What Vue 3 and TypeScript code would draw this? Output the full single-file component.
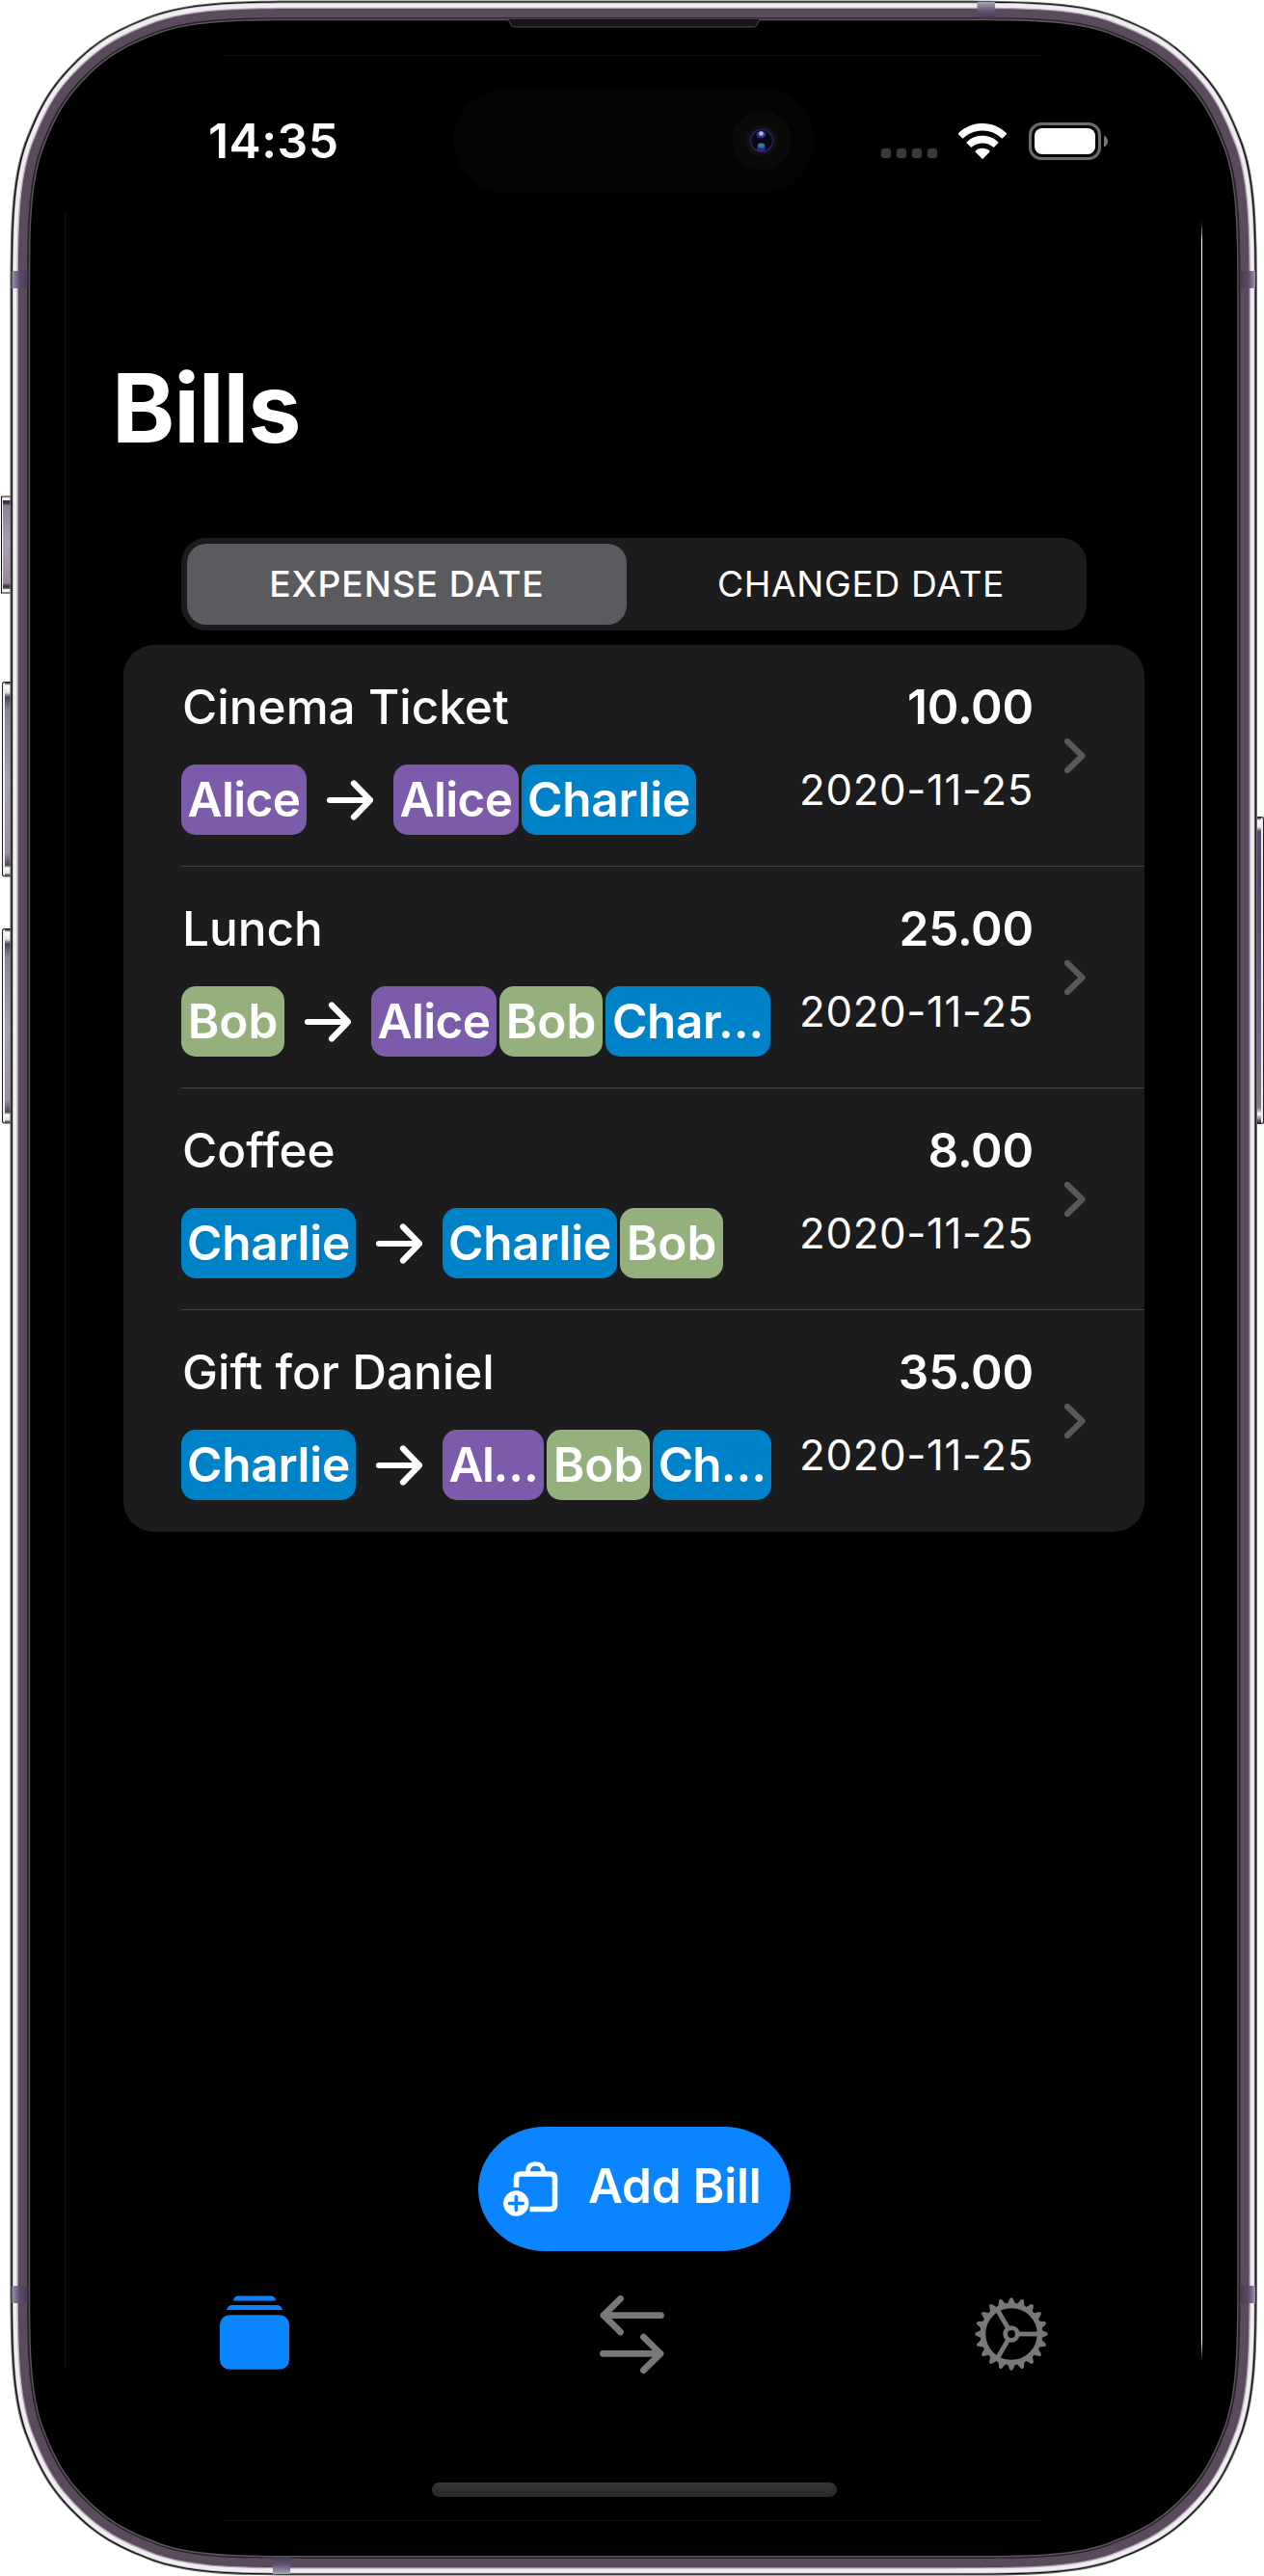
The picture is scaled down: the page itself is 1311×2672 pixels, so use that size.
<script setup lang="ts">
interface Chip {
  label: string
  tone: 'violet' | 'blue' | 'green'
  width: number
  tracking: number
}
interface Bill {
  title: string
  amount: string
  date: string
  payer: Chip
  sharers: Chip[]
}

const alice: Chip = { label: 'Alice', tone: 'violet', width: 130, tracking: -0.6 }
const bob: Chip = { label: 'Bob', tone: 'green', width: 107, tracking: 0 }
const charlie: Chip = { label: 'Charlie', tone: 'blue', width: 181, tracking: -0.25 }

const bills: Bill[] = [
  { title: 'Cinema Ticket', amount: '10.00', date: '2020-11-25', payer: alice, sharers: [alice, charlie] },
  {
    title: 'Lunch',
    amount: '25.00',
    date: '2020-11-25',
    payer: bob,
    sharers: [alice, bob, { label: 'Char…', tone: 'blue', width: 171, tracking: -0.4 }],
  },
  { title: 'Coffee', amount: '8.00', date: '2020-11-25', payer: charlie, sharers: [charlie, bob] },
  {
    title: 'Gift for Daniel',
    amount: '35.00',
    date: '2020-11-25',
    payer: charlie,
    sharers: [
      { label: 'Al…', tone: 'violet', width: 105, tracking: -1.4 },
      bob,
      { label: 'Ch…', tone: 'blue', width: 123, tracking: -0.9 },
    ],
  },
]

/* Rounded rectangle with continuous-curvature corners. */
function squircle(l: number, t: number, r: number, b: number, rad: number): string {
  const p = (k: number): number => +(k * rad).toFixed(2)
  const a = p(1.45)
  const k1 = p(1.09)
  const c = p(0.86)
  const d = p(0.49)
  const e = p(0.133)
  const m = p(0.293)
  return [
    `M${l + a} ${t}`,
    `H${r - a}`,
    `C${r - k1} ${t} ${r - c} ${t} ${r - p(0.67)} ${t + p(0.065)}`,
    `C${r - d} ${t + e} ${r - p(0.4)} ${t + p(0.186)} ${r - m} ${t + m}`,
    `C${r - p(0.186)} ${t + p(0.4)} ${r - e} ${t + d} ${r - p(0.065)} ${t + p(0.67)}`,
    `C${r} ${t + c} ${r} ${t + k1} ${r} ${t + a}`,
    `V${b - a}`,
    `C${r} ${b - k1} ${r} ${b - c} ${r - p(0.065)} ${b - p(0.67)}`,
    `C${r - e} ${b - d} ${r - p(0.186)} ${b - p(0.4)} ${r - m} ${b - m}`,
    `C${r - p(0.4)} ${b - p(0.186)} ${r - d} ${b - e} ${r - p(0.67)} ${b - p(0.065)}`,
    `C${r - c} ${b} ${r - k1} ${b} ${r - a} ${b}`,
    `H${l + a}`,
    `C${l + k1} ${b} ${l + c} ${b} ${l + p(0.67)} ${b - p(0.065)}`,
    `C${l + d} ${b - e} ${l + p(0.4)} ${b - p(0.186)} ${l + m} ${b - m}`,
    `C${l + p(0.186)} ${b - p(0.4)} ${l + e} ${b - d} ${l + p(0.065)} ${b - p(0.67)}`,
    `C${l} ${b - c} ${l} ${b - k1} ${l} ${b - a}`,
    `V${t + a}`,
    `C${l} ${t + k1} ${l} ${t + c} ${l + p(0.065)} ${t + p(0.67)}`,
    `C${l + e} ${t + d} ${l + p(0.186)} ${t + p(0.4)} ${l + m} ${t + m}`,
    `C${l + p(0.4)} ${t + p(0.186)} ${l + d} ${t + e} ${l + p(0.67)} ${t + p(0.065)}`,
    `C${l + c} ${t} ${l + k1} ${t} ${l + a} ${t}Z`,
  ].join('')
}

/* Case layers, outermost first: inset from the case edge and fill. */
const layers = [
  { x: 0, y: 0, fill: '#6f726f' },
  { x: 1.2, y: 1, fill: '#0a0a0a' },
  { x: 2.5, y: 2, fill: '#a9a9ab' },
  { x: 3.2, y: 2.8, fill: '#f0edf1' },
  { x: 7, y: 7.2, fill: '#b9aabb' },
  { x: 8.4, y: 8.4, fill: '#5b495e' },
  { x: 17.6, y: 17.6, fill: '#2b1f2d' },
  { x: 19.4, y: 19, fill: '#585858' },
  { x: 20.8, y: 20.6, fill: '#000' },
].map((s) => ({ fill: s.fill, d: squircle(10.4 + s.x, 0.6 + s.y, 1304 - s.x, 2671.6 - s.y, 222 - s.x) }))

const teeth = Array.from({ length: 20 }, (_, i) => i * 18)
</script>

<template>
  <div class="phone">
    <svg class="case" viewBox="0 0 1311 2672" aria-hidden="true">
      <defs>
        <linearGradient id="band-l" x1="0" x2="1"><stop offset="0" stop-color="#9c93b3" /><stop offset=".5" stop-color="#5a4a66" /><stop offset="1" stop-color="#4b3c56" /></linearGradient>
        <linearGradient id="band-r" x1="1" x2="0"><stop offset="0" stop-color="#9c93b3" /><stop offset=".5" stop-color="#5a4a66" /><stop offset="1" stop-color="#4b3c56" /></linearGradient>
        <linearGradient id="band-t" x1="0" x2="0" y1="0" y2="1"><stop offset="0" stop-color="#a9a2bc" /><stop offset=".6" stop-color="#5f506b" /><stop offset="1" stop-color="#4b3c56" /></linearGradient>
        <linearGradient id="band-b" x1="0" x2="0" y1="1" y2="0"><stop offset="0" stop-color="#a9a2bc" /><stop offset=".6" stop-color="#5f506b" /><stop offset="1" stop-color="#4b3c56" /></linearGradient>
        <linearGradient id="key" x1="0" x2="0" y1="0" y2="1">
          <stop offset="0" stop-color="#222" /><stop offset=".015" stop-color="#fff" /><stop offset=".05" stop-color="#e8e8e8" /><stop offset=".075" stop-color="#4c4058" /><stop offset=".14" stop-color="#8a7f98" /><stop offset=".5" stop-color="#a9a0b6" /><stop offset=".88" stop-color="#9a8ca2" /><stop offset=".945" stop-color="#54465c" /><stop offset=".96" stop-color="#fff" /><stop offset=".985" stop-color="#ddd" /><stop offset="1" stop-color="#222" />
        </linearGradient>
        <linearGradient id="action" x1="0" x2="0" y1="0" y2="1">
          <stop offset="0" stop-color="#3a3a3a" /><stop offset=".03" stop-color="#3a3040" /><stop offset=".06" stop-color="#8c8098" /><stop offset=".5" stop-color="#aaa1b6" /><stop offset=".93" stop-color="#9a8796" /><stop offset=".97" stop-color="#3a3040" /><stop offset="1" stop-color="#777" />
        </linearGradient>
        <linearGradient id="power" x1="0" x2="0" y1="0" y2="1">
          <stop offset="0" stop-color="#222" /><stop offset=".01" stop-color="#fff" /><stop offset=".03" stop-color="#eee" /><stop offset=".045" stop-color="#5b4d68" /><stop offset=".2" stop-color="#57456f" /><stop offset=".8" stop-color="#776c86" /><stop offset=".95" stop-color="#8c7688" /><stop offset=".97" stop-color="#fff" /><stop offset="1" stop-color="#222" />
        </linearGradient>
        <linearGradient id="glint" x1="0" x2="0" y1="0" y2="1"><stop offset="0" stop-color="#fff" stop-opacity="0" /><stop offset=".01" stop-color="#fff" /><stop offset=".99" stop-color="#fff" /><stop offset="1" stop-color="#fff" stop-opacity="0" /></linearGradient>
      </defs>

      <rect x="1" y="514.5" width="12" height="101" fill="#111" />
      <rect x="2" y="515.5" width="9" height="99" fill="#f3eef1" />
      <rect x="3" y="519" width="8" height="92" fill="url(#action)" />
      <g v-for="y in [707, 963]" :key="y">
        <rect x="2" :y="y" width="12" height="202.5" rx="2.5" fill="#222" />
        <rect x="3" :y="y + 1" width="9" height="200.5" rx="2" fill="#eee" />
        <rect x="5" :y="y + 1" width="6" height="200.5" fill="url(#key)" />
      </g>
      <rect x="1298" y="847" width="13" height="319" rx="2.5" fill="#222" />
      <rect x="1300" y="848" width="10" height="317" rx="2" fill="#f0eef2" />
      <rect x="1300" y="848" width="8" height="317" fill="url(#power)" />

      <path v-for="(s, i) in layers" :key="i" :d="s.d" :fill="s.fill" />

      <rect x="12.5" y="281" width="16" height="18" fill="url(#band-l)" />
      <rect x="12.5" y="2371" width="16" height="18" fill="url(#band-l)" />
      <rect x="1287" y="281" width="15" height="18" fill="url(#band-r)" />
      <rect x="1287" y="2371" width="15" height="18" fill="url(#band-r)" />
      <rect x="1013.5" y="2" width="18.5" height="16.5" fill="url(#band-t)" />
      <rect x="283" y="2653" width="18" height="17" fill="url(#band-b)" />

      <path d="M527 20L530 26Q531 28 534 28H781Q784 28 785 26L788 20" fill="#161616" stroke="#4c4c4c" stroke-width="1" />
      <path d="M230 57.5H1080M230 2614.5H1080M67.5 220V2455" fill="none" stroke="#101010" />
      <rect x="1246" y="229" width="1" height="2220" fill="url(#glint)" />
    </svg>

    <main class="screen">
      <header class="status">
        <span class="time">14:35</span>
        <div class="island">
          <svg class="camera" viewBox="0 0 62 62">
            <circle cx="31" cy="31" r="31" fill="#0a0a0a" />
            <circle cx="31" cy="31" r="16" fill="#111" />
            <circle cx="31" cy="31" r="11.5" fill="#070714" stroke="#1c2560" stroke-width="1.6" />
            <ellipse cx="30.5" cy="24.5" rx="5" ry="3.4" fill="#34348a" />
            <circle cx="30.5" cy="23.5" r="2.2" fill="#b9b9dc" />
            <ellipse cx="30.5" cy="39" rx="4.6" ry="3.2" fill="#3f1f86" />
            <ellipse cx="30.5" cy="35.8" rx="3.6" ry="2.6" fill="#2f7896" />
          </svg>
        </div>
        <div class="signals">
          <span class="dots"><i v-for="n in 4" :key="n"></i></span>
          <svg class="wifi" viewBox="0 0 50 37" fill="#fff">
            <path d="M25 0C35.200 0 43.500 4 50 10.200Q50.300 10.900 49.800 11.500L46 15.300Q45.300 15.800 44.700 15.300C39.500 10.500 32.600 7.600 25 7.600S10.500 10.500 5.300 15.300Q4.700 15.800 4 15.300L.2 11.500Q-.3 10.900 0 10.200C6.500 4 14.800 0 25 0Z" />
            <path d="M25 12.800C31.500 12.800 37 15.200 41.200 19.200Q41.700 19.900 41.200 20.500L37.200 24.500Q36.600 25 36 24.500C33.200 22 29.400 20.400 25 20.400S16.800 22 14 24.500Q13.400 25 12.800 24.500L8.800 20.500Q8.300 19.900 8.800 19.200C13 15.200 18.500 12.800 25 12.800Z" />
            <path d="M25 25.700C28 25.700 30.400 26.700 32.300 28.400Q32.800 29.100 32.300 29.700L25.700 36.400Q25 37 24.300 36.400L17.700 29.700Q17.200 29.100 17.700 28.400C19.600 26.700 22 25.700 25 25.700Z" />
          </svg>
          <svg class="battery" viewBox="0 0 82 39">
            <rect x="1.500" y="1.500" width="72" height="36" rx="11.500" fill="none" stroke="#6c6c6c" stroke-width="3" />
            <rect x="6" y="6" width="63" height="27" rx="8" fill="#fff" />
            <path d="M78 13.500Q82 15.500 82 19.500T78 25.500Z" fill="#777" />
          </svg>
        </div>
      </header>

      <h1 class="title">Bills</h1>

      <div class="segments">
        <button class="segment active">EXPENSE DATE</button>
        <button class="segment">CHANGED DATE</button>
      </div>

      <section class="list">
        <article v-for="bill in bills" :key="bill.title" class="bill">
          <div class="info">
            <h2 class="name">{{ bill.title }}</h2>
            <div class="flow">
              <span class="chip" :class="bill.payer.tone" :style="{ width: bill.payer.width + 'px', letterSpacing: bill.payer.tracking + 'px' }">{{ bill.payer.label }}</span>
              <svg class="arrow" viewBox="0 0 48 42"><path d="M3 21H45M28 3.500L45 21L28 38.500" /></svg>
              <div class="sharers">
                <span v-for="s in bill.sharers" :key="s.label" class="chip" :class="s.tone" :style="{ width: s.width + 'px', letterSpacing: s.tracking + 'px' }">{{ s.label }}</span>
              </div>
            </div>
          </div>
          <div class="figures">
            <span class="amount">{{ bill.amount }}</span>
            <time class="date">{{ bill.date }}</time>
          </div>
          <svg class="chevron" viewBox="0 0 22 36"><path d="M3 3L18.500 18L3 33" /></svg>
        </article>
      </section>

      <button class="add">
        <svg class="bag" viewBox="0 0 57 57">
          <path d="M13.500 27V17.500Q13.500 13 18 13H49Q53.500 13 53.500 17.500V45Q53.500 49.500 49 49.500H27.500" fill="none" stroke="#fff" stroke-width="5.600" />
          <path d="M25.500 13V10.500Q25.500 2.500 33.500 2.500T41.500 10.500V13" fill="none" stroke="#fff" stroke-width="4.600" />
          <circle cx="13.300" cy="43.500" r="13.200" fill="#fff" />
          <path d="M13.300 36.500V50.500M6.300 43.500H20.300" stroke="#0a84ff" stroke-width="3.400" stroke-linecap="round" />
        </svg>
        <span class="add-label">Add Bill</span>
      </button>

      <nav class="tabs">
        <svg class="tab-stack" viewBox="0 0 72 77" fill="#0a84ff">
          <path d="M14 5.500Q15 .5 19 .5H53Q57 .5 58 5.500Z" />
          <path d="M7 15Q8.500 10 13 10H59Q63.500 10 65 15Z" />
          <rect x="0" y="20.200" width="72" height="56.500" rx="10" />
        </svg>
        <svg class="tab-swap" viewBox="0 0 67 81" fill="none" stroke="#787878" stroke-width="6.800" stroke-linecap="round" stroke-linejoin="round">
          <path d="M63.500 20.600H4M21.500 3.400L4 20.600L21.500 37.800" />
          <path d="M3.500 60.300H63M45.500 43.100L63 60.300L45.500 77.500" />
        </svg>
        <svg class="tab-gear" viewBox="-38 -38 76 76" fill="none" stroke="#787878">
          <circle r="29.500" stroke-width="5.600" />
          <circle r="6.300" stroke-width="4.800" />
          <path v-for="a in [0, 120, 240]" :key="a" d="M8 0H28" stroke-width="4.800" :transform="`rotate(${a})`" />
          <path v-for="a in teeth" :key="'t' + a" d="M31 -4.200L35.800 -2.100Q37.800 -1.500 37.800 0T35.800 2.100L31 4.200Z" fill="#787878" stroke="none" :transform="`rotate(${a})`" />
        </svg>
      </nav>

      <div class="home"></div>
    </main>
  </div>
</template>

<style>
body {
  background: #fff;
}
</style>

<style scoped>
.phone {
  position: relative;
  width: 1311px;
  height: 2672px;
  overflow: hidden;
  font-family: Inter, 'Liberation Sans', sans-serif;
  color: #fff;
}
.case {
  position: absolute;
  inset: 0;
  width: 1311px;
  height: 2672px;
}
.screen {
  position: relative;
  box-sizing: border-box;
  display: flex;
  flex-direction: column;
  width: 1179px;
  margin-left: 67px;
  padding: 91px 59px 0 61px;
  height: 2614px;
}
svg {
  display: block;
  flex: none;
}
h1,
h2,
button {
  margin: 0;
  padding: 0;
  border: 0;
  background: none;
  font: inherit;
  color: inherit;
}
.status {
  display: flex;
  align-items: center;
  height: 110px;
}
.time {
  width: 254px;
  margin-left: 88px;
  font-size: 49.8px;
  font-weight: 600;
  line-height: 60px;
  letter-spacing: 0.5px;
}
.island {
  display: flex;
  align-items: center;
  justify-content: flex-end;
  box-sizing: border-box;
  width: 374px;
  height: 110px;
  padding-right: 23px;
  border-radius: 55px;
  background: #040404;
}
.camera {
  width: 62px;
  height: 62px;
}
.signals {
  display: flex;
  align-items: center;
  margin-left: 70px;
}
.dots {
  display: flex;
  gap: 6px;
  margin-top: 26px;
}
.dots i {
  width: 10px;
  height: 10px;
  border-radius: 3px;
  background: #393939;
}
.wifi {
  width: 50px;
  height: 37px;
  margin-left: 22px;
}
.battery {
  width: 82px;
  height: 39px;
  margin-left: 23px;
}
.title {
  margin: 162px 0 0 -12px;
  font-size: 98.7px;
  font-weight: 700;
  line-height: 120px;
  letter-spacing: -1.1px;
}
.segments {
  box-sizing: border-box;
  display: flex;
  width: 939px;
  height: 96px;
  margin: 75px 0 0 60px;
  padding: 6px;
  border-radius: 26px;
  background: #1c1c1e;
}
.segment {
  width: 456px;
  margin-right: 15px;
  border-radius: 20px;
  font-size: 37.2px;
  font-weight: 400;
  line-height: 84px;
  text-align: center;
  letter-spacing: 0.65px;
}
.segment + .segment {
  margin-right: 0;
}
.segment.active {
  background: #5b5a5f;
  font-weight: 500;
  letter-spacing: 0.9px;
}
.list {
  width: 1059px;
  margin-top: 15px;
  border-radius: 32px;
  background: #1c1c1e;
}
.bill {
  position: relative;
  display: flex;
  height: 230px;
  padding-left: 60px;
}
.bill:not(:last-child)::after {
  content: '';
  position: absolute;
  right: 0;
  bottom: 0;
  left: 60px;
  height: 1px;
  background: #424245;
}
.info {
  width: 640px;
  padding-top: 34px;
}
.name {
  margin-left: 1px;
  font-size: 49.5px;
  font-weight: 500;
  line-height: 60px;
  white-space: nowrap;
}
.flow {
  display: flex;
  align-items: center;
  margin-top: 30px;
}
.chip {
  height: 73px;
  border-radius: 15px;
  font-size: 49.5px;
  font-weight: 600;
  line-height: 73px;
  text-align: center;
  white-space: nowrap;
}
.violet {
  background: #7c5caa;
}
.blue {
  background: #0082c9;
}
.green {
  background: #94b17d;
}
.arrow {
  width: 48px;
  height: 42px;
  margin: 0 21px;
}
.arrow path,
.chevron path {
  fill: none;
  stroke: #fff;
  stroke-width: 6.2;
  stroke-linecap: round;
  stroke-linejoin: round;
}
.sharers {
  display: flex;
  gap: 3px;
}
.figures {
  display: flex;
  flex-direction: column;
  align-items: flex-end;
  width: 244px;
  padding-top: 34px;
}
.amount {
  font-size: 49.5px;
  font-weight: 600;
  line-height: 60px;
  letter-spacing: -0.2px;
}
.date {
  margin-top: 32px;
  font-size: 43.8px;
  line-height: 50px;
  letter-spacing: 0.65px;
  white-space: nowrap;
}
.chevron {
  align-self: center;
  width: 22px;
  height: 36px;
  margin-left: 32px;
}
.chevron path {
  stroke: #59595b;
}
.add {
  display: flex;
  align-items: center;
  width: 324px;
  height: 129px;
  margin: 617px 0 0 368px;
  padding-left: 26px;
  box-sizing: border-box;
  border-radius: 69px / 64.5px;
  background: #0a84ff;
}
.bag {
  width: 57px;
  height: 57px;
}
.add-label {
  margin: -7px 0 0 31px;
  font-size: 49.5px;
  font-weight: 600;
  line-height: 60px;
  letter-spacing: -0.2px;
  white-space: nowrap;
}
.tabs {
  display: flex;
  align-items: flex-start;
  margin-top: 46px;
}
.tab-stack {
  width: 72px;
  height: 77px;
  margin-left: 99.5px;
}
.tab-swap {
  width: 67px;
  height: 81px;
  margin-left: 322.5px;
}
.tab-gear {
  width: 76px;
  height: 76px;
  margin: 2px 0 0 322px;
}
.home {
  flex: none;
  width: 420px;
  height: 15px;
  margin: 113px 0 0 320px;
  border-radius: 8px;
  background: linear-gradient(#343434, #292929);
}
</style>
